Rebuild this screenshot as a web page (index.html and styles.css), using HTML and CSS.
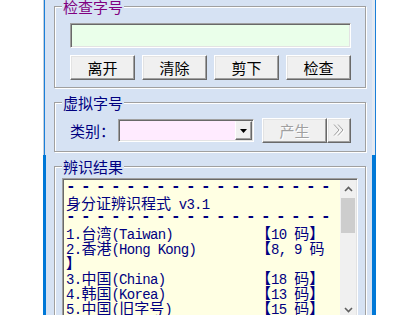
FILE: index.html
```html
<!DOCTYPE html>
<html lang="zh-CN">
<head>
  <meta charset="UTF-8">
  <meta name="viewport" content="width=device-width, initial-scale=1.0">
  <title>身分证辨识程式</title>
  <link rel="stylesheet" href="styles.css">
</head>
<body>
  <div class="window">
    <div class="edge edge-left"></div>
    <div class="client">
      <fieldset class="group group-check">
        <legend>检查字号</legend>
        <input class="id-input" type="text">
        <div class="btn-row">
          <button class="btn">离开</button>
          <button class="btn">清除</button>
          <button class="btn">剪下</button>
          <button class="btn">检查</button>
        </div>
      </fieldset>
      <fieldset class="group group-gen">
        <legend>虚拟字号</legend>
        <div class="gen-row">
          <label class="field-label">类别：</label>
          <div class="combo">
            <span class="combo-btn">
              <svg width="7" height="4" viewBox="0 0 7 4"><path d="M0 0H7L3.5 4Z" fill="#000"/></svg>
            </span>
          </div>
          <button class="btn btn-gen" disabled>产生</button>
          <button class="btn btn-more" disabled>
            <svg width="14" height="15" viewBox="0 0 14 15">
              <path d="M2 1.5 7 7 2 12.5M6 1.5 11 7 6 12.5" fill="none" stroke="#ffffff" stroke-width="1" transform="translate(1 1)"/>
              <path d="M2 1.5 7 7 2 12.5M6 1.5 11 7 6 12.5" fill="none" stroke="#a0a0a0" stroke-width="1"/>
            </svg>
          </button>
        </div>
      </fieldset>
      <fieldset class="group group-result">
        <legend>辨识结果</legend>
        <div class="memo">
          <div class="memo-text">
            <div class="full dash">- - - - - - - - - - - - - - - - - -</div>
            <div class="full"><span class="zh">身分证辨识程式</span> v3.1</div>
            <div class="full dash">- - - - - - - - - - - - - - - - - -</div>
            <div>1.<span class="zh">台湾</span>(Taiwan)</div>
            <div><span class="zh">【</span>10 <span class="zh">码】</span></div>
            <div>2.<span class="zh">香港</span>(Hong Kong)</div>
            <div><span class="zh">【</span>8, 9 <span class="zh">码</span></div>
            <div class="full"><span class="zh">】</span></div>
            <div>3.<span class="zh">中国</span>(China)</div>
            <div><span class="zh">【</span>18 <span class="zh">码】</span></div>
            <div>4.<span class="zh">韩国</span>(Korea)</div>
            <div><span class="zh">【</span>13 <span class="zh">码】</span></div>
            <div>5.<span class="zh">中国</span>(<span class="zh">旧字号</span>)</div>
            <div><span class="zh">【</span>15 <span class="zh">码】</span></div>
          </div>
          <div class="vscroll">
            <div class="sb-arrow">
              <svg width="9" height="6" viewBox="0 0 9 6"><path d="M1 5 4.5 1.5 8 5" fill="none" stroke="#606060" stroke-width="1.6"/></svg>
            </div>
            <div class="sb-thumb"></div>
            <div class="sb-track"></div>
            <div class="sb-arrow">
              <svg width="9" height="6" viewBox="0 0 9 6"><path d="M1 1 4.5 4.5 8 1" fill="none" stroke="#606060" stroke-width="1.6"/></svg>
            </div>
          </div>
        </div>
      </fieldset>
    </div>
    <div class="edge edge-right"></div>
  </div>
</body>
</html>
```

FILE: styles.css
```css
* {
  box-sizing: border-box;
}
body {
  margin: 0;
  width: 420px;
  height: 315px;
  overflow: hidden;
  background-color: #ffffff;
  font-family: "Noto Sans CJK SC", sans-serif;
  font-size: 15px;
}
.window {
  display: flex;
  margin-left: 43px;
  width: 333px;
  height: 315px;
}
.edge {
  flex: none;
}
.edge-left {
  width: 3px;
  background:
    linear-gradient(#0078d7, #0078d7) 0 155px / 100% 100% no-repeat,
    linear-gradient(to right, #c5cfdd 0 1px, #1a7fd8 1px 2px, #d6e2f3 2px);
}
.edge-right {
  width: 4px;
  background:
    linear-gradient(#0078d7, #0078d7) 0 155px / 100% 100% no-repeat,
    linear-gradient(to right, #e4eaf2 0 3px, #1a7fd8 3px);
}
.client {
  flex: none;
  width: 326px;
  padding: 0 6px 0 8px;
  background-color: #d6e2f3;
}
.group {
  margin: 0 0 8px;
  padding: 10px 13px 7px 15px;
  min-width: 0;
  border: 1px solid #a0a0a0;
  box-shadow: inset 1px 1px 0 #ffffff, 1px 1px 0 #ffffff;
}
.group legend {
  margin-left: -8px;
  padding: 0 1px;
  line-height: 13px;
  color: #000080;
  background-color: #d6e2f3;
}
.group-check legend {
  color: #800080;
}
.group-gen {
  padding-top: 9px;
  padding-bottom: 8px;
}
.group-result {
  padding: 5px 7px 0;
}
.group-result legend {
  margin-left: 0;
}
.id-input {
  display: block;
  width: 281px;
  height: 25px;
  margin: 0;
  padding: 0 3px;
  border: 1px solid;
  border-color: #a0a0a0 #ffffff #ffffff #a0a0a0;
  box-shadow: inset 1px 1px 0 #696969, inset -1px -1px 0 #e3e3e3;
  background-color: #eaffea;
  font: inherit;
  outline: none;
}
.btn-row {
  display: flex;
  gap: 7px;
  margin-top: 7px;
}
.btn {
  flex: none;
  width: 65px;
  height: 25px;
  padding: 0;
  border: 1px solid;
  border-color: #ffffff #696969 #696969 #ffffff;
  box-shadow: inset -1px -1px 0 #a0a0a0, inset 1px 1px 0 #e3e3e3;
  background-color: #f0f0f0;
  color: #000000;
  font: 15px/1 "Noto Sans CJK SC", sans-serif;
}
.gen-row {
  display: flex;
  align-items: center;
  height: 25px;
}
.field-label {
  width: 48px;
  color: #000080;
}
.combo {
  display: flex;
  justify-content: flex-end;
  width: 136px;
  height: 23px;
  padding: 1px;
  border: 1px solid;
  border-color: #a0a0a0 #ffffff #ffffff #a0a0a0;
  box-shadow: inset 1px 1px 0 #696969, inset -1px -1px 0 #e3e3e3;
  background-color: #ffebff;
}
.combo-btn {
  display: flex;
  align-items: center;
  justify-content: center;
  width: 17px;
  height: 100%;
  border: 1px solid;
  border-color: #f0f0f0 #696969 #696969 #ffffff;
  box-shadow: inset -1px -1px 0 #a0a0a0;
  background-color: #f0f0f0;
}
.btn-gen {
  margin-left: 8px;
  color: #a0a0a0;
  text-shadow: 1px 1px 0 #ffffff;
}
.btn-more {
  width: 24px;
  display: flex;
  align-items: center;
  justify-content: center;
}
.memo {
  display: flex;
  height: 142px;
  padding: 1px;
  border: 1px solid;
  border-color: #a0a0a0 #ffffff #ffffff #a0a0a0;
  box-shadow: inset 1px 1px 0 #696969, inset -1px -1px 0 #e3e3e3;
  background-color: #ffffe3;
}
.memo-text {
  flex: 1;
  display: grid;
  grid-template-columns: 190px 1fr;
  grid-auto-rows: 15px;
  align-content: start;
  padding-left: 2px;
  overflow: hidden;
  color: #000080;
  font: 14px/15px "Liberation Mono", "Noto Sans CJK SC", monospace;
  letter-spacing: -0.7px;
  white-space: pre;
}
.full {
  grid-column: 1 / -1;
}
.dash {
  font: bold 16px/15px "Liberation Mono", monospace;
  letter-spacing: -2.1px;
}
.zh {
  font: 15px/15px "Noto Sans CJK SC", sans-serif;
  letter-spacing: 0;
}
.vscroll {
  flex: none;
  display: flex;
  flex-direction: column;
  width: 16px;
  background-color: #f0f0f0;
}
.sb-arrow {
  display: flex;
  align-items: center;
  justify-content: center;
  height: 17px;
}
.sb-thumb {
  height: 35px;
  margin: 1px 1px 0;
  background-color: #cdcdcd;
}
.sb-track {
  flex: 1;
}
```
